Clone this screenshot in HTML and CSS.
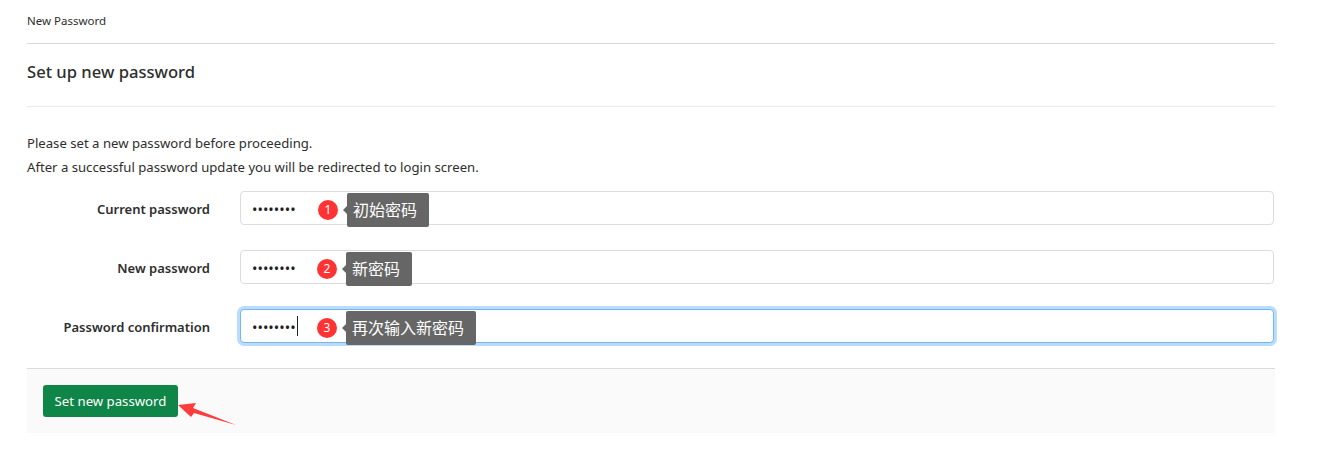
FILE: index.html
```html
<!DOCTYPE html>
<html lang="en">
<head>
  <meta charset="UTF-8" />
  <title>New Password</title>
  <link rel="stylesheet" href="styles.css">
</head>
<body>
  <div class="page">
    <div class="breadcrumb">New Password</div>
    <h3 class="title">Set up new password</h3>
    <div class="intro">
      <p>Please set a new password before proceeding.</p>
      <p>After a successful password update you will be redirected to login screen.</p>
    </div>
    <form>
      <div class="row">
        <label for="current">Current password</label>
        <div class="field">
          <input id="current" type="password" value="12345678">
          <div class="note note-1"><span class="num">1</span><span class="tip">初始密码</span></div>
        </div>
      </div>
      <div class="row">
        <label for="next">New password</label>
        <div class="field">
          <input id="next" type="password" value="12345678">
          <div class="note note-2"><span class="num">2</span><span class="tip">新密码</span></div>
        </div>
      </div>
      <div class="row">
        <label for="confirm">Password confirmation</label>
        <div class="field">
          <input id="confirm" class="focused" type="password" value="12345678">
          <span class="caret"></span>
          <div class="note note-2"><span class="num">3</span><span class="tip">再次输入新密码</span></div>
        </div>
      </div>
      <div class="actions">
        <button type="button">Set new password</button>
        <svg class="arrow" width="60" height="28" viewBox="0 0 60 28">
          <path d="M0 2 L18 0 L15 5 L58 22 L16 10 L13 14 Z" fill="#ff3b3b"/>
        </svg>
      </div>
    </form>
  </div>
</body>
</html>
```

FILE: styles.css
```css
body {
  margin: 0;
  background-color: #fff;
  color: #2e2e2e;
  font-family: "Noto Sans", "Noto Sans CJK SC", sans-serif;
  font-size: 13.15px;
}
.page {
  width: 1248px;
  margin-left: 27px;
}
.breadcrumb {
  height: 43px;
  line-height: 41px;
  font-size: 11.5px;
  border-bottom: 1px solid #dbdbdb;
}
.title {
  margin: 0;
  height: 62px;
  line-height: 56px;
  font-size: 16.6px;
  font-weight: 500;
  border-bottom: 1px solid #eaeaea;
}
.intro {
  padding-top: 24px;
  padding-bottom: 12px;
}
.intro p {
  margin: 0;
  line-height: 24px;
}
.row {
  display: flex;
  align-items: center;
  height: 34px;
  margin-bottom: 25px;
}
.row label {
  width: 183px;
  padding-top: 2px;
  margin-right: 30px;
  text-align: right;
  font-size: 13px;
  font-weight: 600;
}
.field {
  position: relative;
  flex: 1;
  margin-right: 1px;
}
input {
  display: block;
  width: 100%;
  height: 34px;
  box-sizing: border-box;
  padding: 2px 11px 0;
  border: 1px solid #dcdcdc;
  border-radius: 4px;
  font-family: inherit;
  font-size: 14.5px;
  color: #1f1f1f;
  outline: none;
}
input.focused {
  border-color: #73b6f5;
  box-shadow: 0 0 0 3px #bcdcfd;
}
.caret {
  position: absolute;
  left: 57px;
  top: 7px;
  width: 1px;
  height: 20px;
  background-color: #222;
}
.note {
  position: absolute;
  top: 2px;
  display: flex;
  align-items: center;
}
.note-1 {
  left: 78px;
}
.note-2 {
  left: 77px;
}
.num {
  width: 20px;
  height: 20px;
  border-radius: 50%;
  background-color: #ff3333;
  color: #fff;
  font-size: 12px;
  line-height: 20px;
  text-align: center;
}
.tip {
  position: relative;
  margin-left: 9px;
  height: 34px;
  line-height: 34px;
  padding: 0 12px 0 6px;
  border-radius: 2px;
  background-color: #666;
  color: #fff;
  font-size: 16px;
}
.tip::before {
  content: "";
  position: absolute;
  left: -4px;
  top: 13px;
  border-top: 4px solid transparent;
  border-bottom: 4px solid transparent;
  border-right: 4px solid #666;
}
.actions {
  position: relative;
  box-sizing: border-box;
  height: 65px;
  padding: 16px;
  border-top: 1px solid #dbdbdb;
  background-color: #fafafa;
}
button {
  display: block;
  width: 135px;
  height: 32px;
  padding: 0;
  border: none;
  border-radius: 3px;
  background-color: #108548;
  color: #fff;
  font-family: inherit;
  font-size: 13.2px;
}
.arrow {
  position: absolute;
  left: 151px;
  top: 34px;
}
```
